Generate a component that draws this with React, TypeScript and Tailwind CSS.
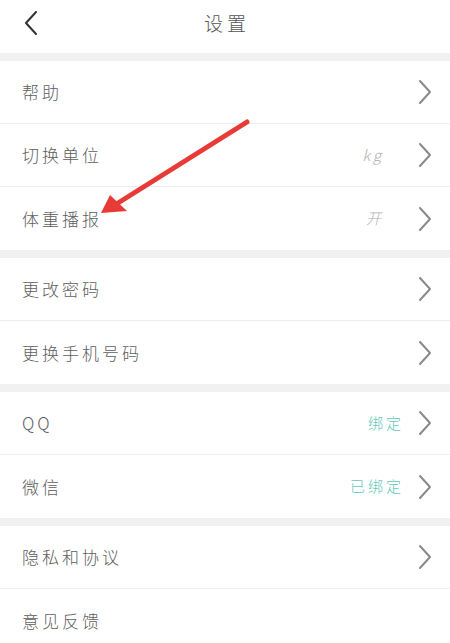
import React from 'react'

type Row = { label: string; value?: string; teal?: boolean; chevron?: boolean }

const groups: Row[][] = [
  [
    { label: '帮助' },
    { label: '切换单位', value: 'kg' },
    { label: '体重播报', value: '开' },
  ],
  [{ label: '更改密码' }, { label: '更换手机号码' }],
  [
    { label: 'QQ', value: '绑定', teal: true },
    { label: '微信', value: '已绑定', teal: true },
  ],
  [{ label: '隐私和协议' }, { label: '意见反馈', chevron: false }],
]

function Chevron() {
  return (
    <svg width="14" height="26" viewBox="0 0 14 26" className="shrink-0">
      <path d="M2 2 L12 13 L2 24" fill="none" stroke="#8a8a8a" strokeWidth="2" strokeLinecap="round" strokeLinejoin="round" />
    </svg>
  )
}

export default function App() {
  return (
    <div
      className="relative w-[450px] h-[643px] overflow-hidden bg-white text-[#5e5e5e]"
      style={{ fontFamily: '"Noto Sans CJK SC", "Noto Sans", sans-serif' }}
    >
      {/* header */}
      <div className="h-[53px] flex items-center justify-center relative">
        <svg width="14" height="24" viewBox="0 0 14 24" className="absolute left-[24px] top-[11px]">
          <path d="M12 1 L2 12 L12 23" fill="none" stroke="#333" strokeWidth="2" strokeLinecap="round" strokeLinejoin="round" />
        </svg>
        <div className="text-[19px] font-light tracking-[4px] pl-[4px] -mt-[6px] text-[#555]">设置</div>
      </div>

      {groups.map((g, gi) => (
        <div key={gi}>
          <div className="h-[8px] bg-[#f1f1f1]" />
          {g.map((r, ri) => (
            <div
              key={r.label}
              className={`h-[63px] flex items-center pl-[22px] pr-[18px] ${
                ri < g.length - 1 ? 'border-b border-[#ededed]' : ''
              }`}
            >
              <div className="flex-1 text-[17px] font-light tracking-[3px]">{r.label}</div>
              {r.value && (
                <div
                  className={`text-[15px] font-light tracking-[3px] ${
                    r.teal ? 'text-[#62c7b9] mr-[14px]' : 'text-[#b0b0b0] italic mr-[34px]'
                  }`}
                >
                  {r.value}
                </div>
              )}
              {r.chevron !== false && <Chevron />}
            </div>
          ))}
        </div>
      ))}

      {/* annotation arrow */}
      <svg className="absolute left-0 top-0 pointer-events-none" width="450" height="643">
        <line x1="247" y1="122" x2="118" y2="203" stroke="#e83a36" strokeWidth="5" strokeLinecap="round" />
        <polygon points="101,213 110,195 127,211" fill="#e83a36" />
      </svg>
    </div>
  )
}
